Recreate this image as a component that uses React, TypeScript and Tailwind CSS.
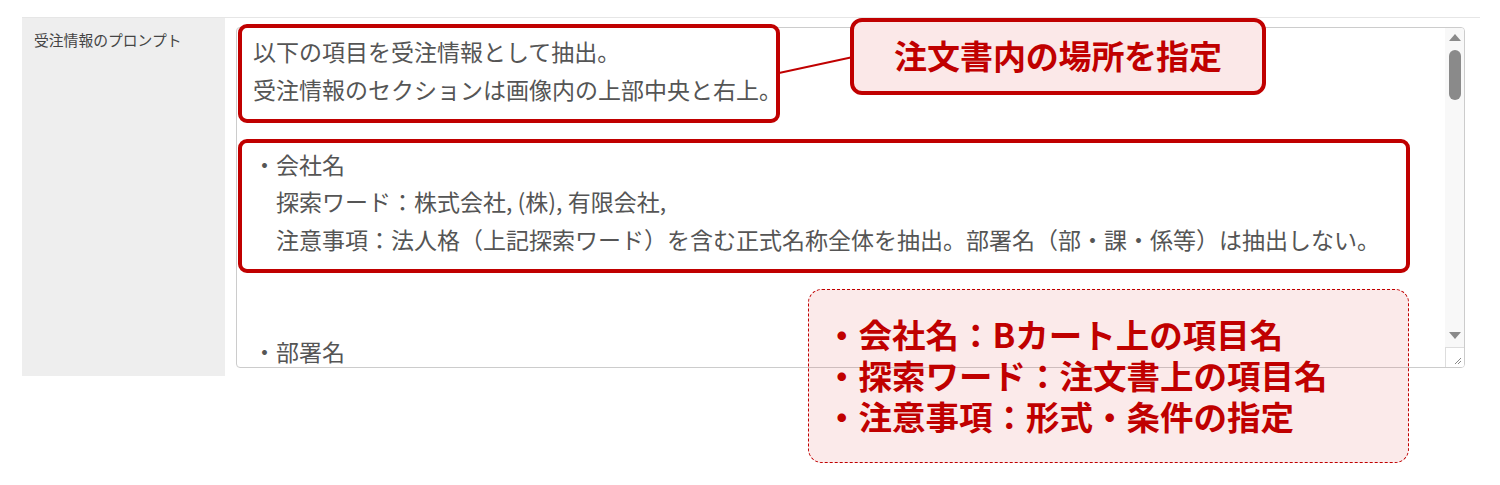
import React from "react";

const lines: string[] = [
  "以下の項目を受注情報として抽出。",
  "受注情報のセクションは画像内の上部中央と右上。",
  "",
  "・会社名",
  "　探索ワード：株式会社, (株), 有限会社,",
  "　注意事項：法人格（上記探索ワード）を含む正式名称全体を抽出。部署名（部・課・係等）は抽出しない。",
  "",
  "",
  "・部署名",
];

export default function App() {
  const jp = "font-['Noto_Sans_CJK_JP','Noto_Sans',sans-serif]";
  return (
    <div className={`relative w-[1500px] h-[485px] bg-white overflow-hidden ${jp}`}>
      <div className="pt-[17px] pl-[22px]">
        <div className="flex w-[1458px] border-t border-[#e6e6e6]">
          <div className="w-[203px] h-[358px] bg-[#eeeeee] pl-[12px] pt-[12px] text-[14.8px] leading-[20px] text-[#444444]">
            受注情報のプロンプト
          </div>
          <div className="flex-1 pl-[11px] pr-[15px] pt-[9px]">
            <div className="flex h-[341px] border border-[#cccccc] rounded-[4px] overflow-hidden">
              <div className="flex-1 pl-[16px] pt-[5px] overflow-hidden text-[23px] leading-[37.5px] text-[#555555] whitespace-pre">
                {lines.map((l, i) => (
                  <div key={i} className="h-[37.5px]">
                    {l}
                  </div>
                ))}
              </div>
              <div className="w-[19px] bg-[#f8f8f8] flex flex-col items-center">
                <svg width="12" height="8" viewBox="0 0 12 8" className="mt-[6px]">
                  <path d="M6 0 L12 7 L0 7 Z" fill="#8a8a8a" />
                </svg>
                <div className="mt-[8px] w-[12px] h-[50px] rounded-full bg-[#8a8a8a]" />
                <div className="flex-1" />
                <svg width="12" height="8" viewBox="0 0 12 8" className="mb-[7px]">
                  <path d="M0 0 L12 0 L6 7 Z" fill="#8a8a8a" />
                </svg>
                <div className="w-[19px] h-[20px] border-t border-l border-[#dddddd] bg-white flex items-end justify-end">
                  <svg width="10" height="10" viewBox="0 0 10 10" className="mr-[2px] mb-[2px]">
                    <path d="M9 3 L3 9 M9 6 L6 9" stroke="#888888" strokeWidth="1" />
                  </svg>
                </div>
              </div>
            </div>
          </div>
        </div>
      </div>

      {/* Annotation: box around first two lines */}
      <div className="absolute left-[238px] top-[24px] w-[542px] h-[99px] border-[4px] border-[#c00000] rounded-[9px]" />
      {/* Annotation: box around company section */}
      <div className="absolute left-[238px] top-[139px] w-[1172px] h-[134px] border-[4px] border-[#c00000] rounded-[9px]" />
      {/* Connector line */}
      <svg className="absolute left-0 top-0" width="1500" height="485">
        <line x1="779" y1="73" x2="853" y2="57" stroke="#c00000" strokeWidth="2" />
      </svg>
      {/* Callout */}
      <div className="absolute left-[850px] top-[18px] w-[416px] h-[77px] border-[4px] border-[#c00000] rounded-[12px] bg-[#fbe8e8] flex items-center justify-center">
        <span className="text-[33px] font-bold text-[#c00000] leading-none [font-feature-settings:'palt'] -mt-[2px]">
          注文書内の場所を指定
        </span>
      </div>
      {/* Dashed explanation box */}
      <div className="absolute left-[808px] top-[289px] w-[601px] h-[174px] border-[1.5px] border-dashed border-[#c00000] rounded-[14px] bg-[rgba(225,90,90,0.13)] pl-[16px] pt-[23px] text-[33.5px] font-bold text-[#c00000] leading-[41px]">
        <div>・会社名：Bカート上の項目名</div>
        <div>・探索ワード：注文書上の項目名</div>
        <div>・注意事項：形式・条件の指定</div>
      </div>
    </div>
  );
}
